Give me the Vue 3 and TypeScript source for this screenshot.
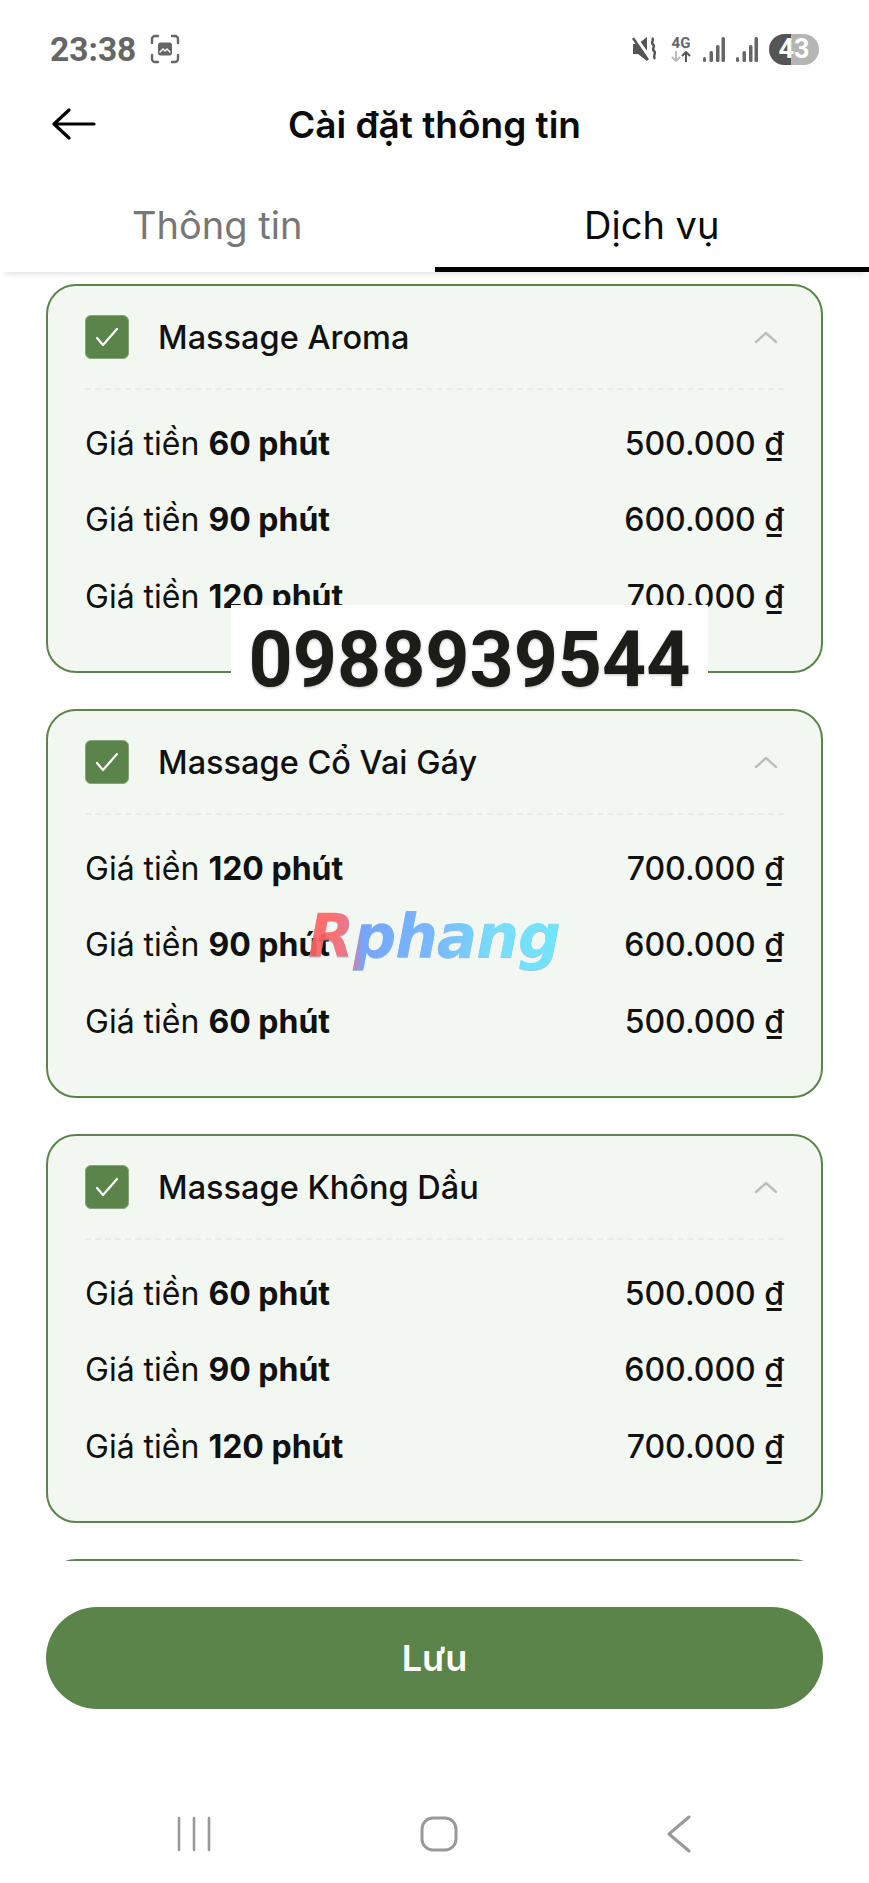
<script setup lang="ts">
interface PriceRow {
  minutes: number
  price: string
}

interface Service {
  name: string
  rows: PriceRow[]
}

const short = { minutes: 60, price: '500.000 ₫' }
const mid = { minutes: 90, price: '600.000 ₫' }
const long = { minutes: 120, price: '700.000 ₫' }

const services: Service[] = [
  { name: 'Massage Aroma', rows: [short, mid, long] },
  { name: 'Massage Cổ Vai Gáy', rows: [long, mid, short] },
  { name: 'Massage Không Dầu', rows: [short, mid, long] },
]
</script>

<template>
  <div class="phone">
    <!-- Status bar -->
    <div class="status">
      <div class="status-left">
        <span class="clock">23:38</span>
        <svg class="shot" width="30" height="30" viewBox="0 0 30 30" fill="none" stroke="#666" stroke-width="2.4" stroke-linecap="round">
          <path d="M2 9V5a3 3 0 0 1 3-3h3M22 2h3a3 3 0 0 1 3 3v4M28 21v4a3 3 0 0 1-3 3h-3M8 28H5a3 3 0 0 1-3-3v-4" />
          <rect x="8" y="8.5" width="14" height="13" rx="2.5" fill="#666" stroke="none" />
          <path d="M10 18l3-3 2 2 2-2 3 3" stroke="#fff" stroke-width="1.4" />
        </svg>
      </div>
      <div class="status-right">
        <svg class="mute" width="25" height="26" viewBox="0 0 25 26">
          <path d="M1 8h5l9-7v24l-9-7H1z" fill="#555" />
          <path d="M3 1l15 21" stroke="#fff" stroke-width="3.5" />
          <path d="M1 2l15 22" stroke="#555" stroke-width="2.4" />
          <path d="M20 2c3 2.500-2 4 1 6.500s-2 4 1 6.500-2 4 1 8" stroke="#555" stroke-width="2.4" fill="none" />
        </svg>
        <div class="net">
          <span class="net-label">4G</span>
          <svg width="21" height="11" viewBox="0 0 21 11" fill="none" stroke-width="2">
            <path d="M5 0v10M1 6l4 4 4-4" stroke="#bbb" />
            <path d="M15 11V1M11 5l4-4 4 4" stroke="#555" />
          </svg>
        </div>
        <svg v-for="n in 2" :key="n" width="22" height="25" viewBox="0 0 22 25" fill="#666">
          <rect x="0" y="20" width="3" height="5" rx="1.5" />
          <rect x="6.500" y="14" width="3.500" height="11" rx="1.500" />
          <rect x="13" y="8" width="3.500" height="17" rx="1.500" />
          <rect x="18.500" y="0" width="3.500" height="25" rx="1.500" />
        </svg>
        <div class="battery"><span>43</span></div>
      </div>
    </div>

    <!-- Header -->
    <div class="header">
      <svg class="back" width="44" height="32" viewBox="0 0 44 32" fill="none" stroke="#000" stroke-width="3.2" stroke-linecap="round" stroke-linejoin="round">
        <path d="M42 16H2M17 2L2 16l15 14" />
      </svg>
      <h1 class="title">Cài đặt thông tin</h1>
    </div>

    <!-- Tabs -->
    <div class="tabs">
      <div class="tab">Thông tin</div>
      <div class="tab active">Dịch vụ</div>
    </div>

    <!-- Services -->
    <div class="list">
      <section v-for="s in services" :key="s.name" class="card">
        <div class="card-head">
          <span class="check">
            <svg width="26" height="22" viewBox="0 0 26 22" fill="none" stroke="#fff" stroke-width="2.2" stroke-linecap="round" stroke-linejoin="round">
              <path d="M3 12l6 7L23 3" />
            </svg>
          </span>
          <span class="name">{{ s.name }}</span>
          <svg class="chevron" width="24" height="14" viewBox="0 0 24 14" fill="none" stroke="#b9c0b9" stroke-width="2.4" stroke-linecap="round" stroke-linejoin="round">
            <path d="M2 12L12 3l10 9" />
          </svg>
        </div>
        <div class="divider"></div>
        <div v-for="r in s.rows" :key="r.minutes" class="row">
          <span>Giá tiền <b>{{ r.minutes }} phút</b></span>
          <span class="price">{{ r.price }}</span>
        </div>
      </section>
      <!-- next card, only its top edge shows above the fold -->
      <section class="card card-next"></section>
    </div>

    <!-- Save -->
    <div class="footer">
      <button class="save">Lưu</button>
    </div>

    <!-- Android nav -->
    <div class="nav">
      <svg width="34" height="36" viewBox="0 0 34 36" stroke="#999" stroke-width="2.6" stroke-linecap="round">
        <path d="M2 2v32M17 2v32M32 2v32" />
      </svg>
      <svg width="38" height="36" viewBox="0 0 38 36" fill="none" stroke="#999" stroke-width="3">
        <rect x="2" y="2" width="34" height="32" rx="11" />
      </svg>
      <svg width="26" height="38" viewBox="0 0 26 38" fill="none" stroke="#999" stroke-width="3" stroke-linecap="round" stroke-linejoin="round">
        <path d="M23 2L3 19l20 17" />
      </svg>
    </div>

    <!-- Watermarks lying over the page -->
    <div class="phone-mark">0988939544</div>
    <div class="logo-mark">Rphang</div>
  </div>
</template>

<style scoped>
.phone {
  position: relative;
  width: 869px;
  height: 1883px;
  overflow: hidden;
  background: #fff;
  display: flex;
  flex-direction: column;
  font-family: Inter, "Noto Sans", sans-serif;
  color: #111;
}

.status {
  height: 98px;
  flex: none;
  display: flex;
  align-items: center;
  justify-content: space-between;
  padding: 0 50px;
}
.status-left,
.status-right {
  display: flex;
  align-items: center;
}
.status-left {
  gap: 14px;
}
.status-right {
  gap: 11px;
}
.clock {
  font-family: Roboto, sans-serif;
  font-weight: 700;
  font-size: 33.500px;
  color: #666;
}
.mute {
  margin-right: 2px;
}
.net {
  display: flex;
  flex-direction: column;
  align-items: center;
  width: 22px;
}
.net-label {
  font-family: Roboto, sans-serif;
  font-weight: 700;
  font-size: 15px;
  line-height: 15px;
  color: #666;
}
.battery {
  width: 50px;
  height: 31px;
  border-radius: 16px;
  background: linear-gradient(90deg, #555 0 44%, #b5b5b5 44% 100%);
  display: flex;
  align-items: center;
  justify-content: center;
  color: #fff;
  font-family: Roboto, sans-serif;
  font-weight: 700;
  font-size: 27px;
}

.header {
  height: 52px;
  flex: none;
  display: flex;
  align-items: center;
  justify-content: center;
  position: relative;
}
.back {
  position: absolute;
  left: 52px;
  top: 10px;
}
.title {
  margin: 0;
  font-size: 37px;
  font-weight: 600;
  color: #0b0b0b;
}

.tabs {
  flex: none;
  height: 122px;
  display: grid;
  grid-template-columns: 1fr 1fr;
  box-shadow: 0 7px 6px -5px rgba(0, 0, 0, 0.12);
  position: relative;
  z-index: 1;
  background: #fff;
}
.tab {
  display: flex;
  align-items: flex-end;
  justify-content: center;
  padding-bottom: 19px;
  font-size: 38px;
  font-weight: 400;
  color: #777;
  border-bottom: 5px solid transparent;
}
.tab.active {
  color: #0a0a0a;
  border-bottom-color: #000;
}

.list {
  height: 1289px;
  box-sizing: border-box;
  flex: none;
  overflow: hidden;
  padding: 12px 46px 0;
  display: flex;
  flex-direction: column;
  gap: 36px;
}
.card {
  flex: none;
  height: 389px;
  box-sizing: border-box;
  border: 2px solid #5a8449;
  border-radius: 30px;
  background: #f2f7f2;
  padding: 29px 37px 0;
}
.card-head {
  display: flex;
  align-items: center;
  height: 44px;
}
.check {
  width: 44px;
  height: 44px;
  border-radius: 6px;
  background: #5a8449;
  border: 1px solid #86a67a;
  box-sizing: border-box;
  display: flex;
  align-items: center;
  justify-content: center;
  margin-right: 29px;
}
.name {
  font-size: 32.500px;
  font-weight: 500;
  color: #111;
  flex: 1;
}
.chevron {
  margin-right: 6px;
}
.divider {
  border-top: 2px dashed #e6ece6;
  margin: 29px 0 15px;
}
.row {
  height: 76.500px;
  display: flex;
  align-items: center;
  justify-content: space-between;
  font-size: 32px;
  color: #111;
}
.row b {
  font-weight: 700;
}
.price {
  font-weight: 500;
}

.footer {
  flex: none;
  padding: 46px 46px 0;
}
.save {
  display: block;
  width: 100%;
  height: 102px;
  border: none;
  border-radius: 51px;
  background: #5a8449;
  color: #fff;
  font-family: inherit;
  font-size: 36px;
  font-weight: 600;
}

.nav {
  flex: none;
  margin-top: 106px;
  padding: 0 177px;
  display: flex;
  align-items: center;
  justify-content: space-between;
}

.phone-mark {
  position: absolute;
  left: 231px;
  top: 605px;
  width: 477px;
  height: 95px;
  box-sizing: border-box;
  padding-top: 15px;
  background: #fff;
  text-align: center;
  font-family: Roboto, sans-serif;
  font-weight: 700;
  font-size: 77px;
  line-height: 80px;
  color: #1c1c18;
  text-shadow: 0 1px 3px rgba(0, 0, 0, 0.25);
}
.logo-mark {
  position: absolute;
  left: 308px;
  top: 896px;
  font-family: "DejaVu Sans", sans-serif;
  font-style: italic;
  font-weight: 700;
  font-size: 60px;
  line-height: 80px;
  letter-spacing: -1px;
  background: linear-gradient(90deg, #ff6464 0 9%, #e0708f 17%, #6a9fff 22%, #6fb4fc 50%, #6fdcfc 75%, #66e4fb 100%);
  -webkit-background-clip: text;
  background-clip: text;
  color: transparent;
  opacity: 0.92;
  filter: drop-shadow(0 1px 0 rgba(70, 130, 190, 0.5));
}
</style>

<style>
html,
body {
  margin: 0;
  background: #fff;
}
</style>
